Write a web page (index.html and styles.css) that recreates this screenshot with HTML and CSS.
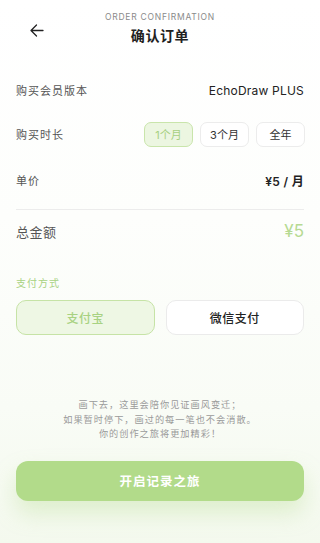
FILE: index.html
```html
<!DOCTYPE html>
<html lang="zh-CN">
<head>
<meta charset="utf-8">
<title>确认订单</title>
<link rel="stylesheet" href="styles.css">
</head>
<body>
<div class="page">
  <header class="header">
    <div class="back">
      <svg width="14" height="13" viewBox="0 0 14 13" fill="none" stroke="#222" stroke-width="1.3" stroke-linecap="round" stroke-linejoin="round"><path d="M13 6.5H1.2M6.5 1L1 6.5L6.5 12"/></svg>
    </div>
    <div class="titles">
      <div class="eyebrow">ORDER CONFIRMATION</div>
      <div class="title">确认订单</div>
    </div>
    <div></div>
  </header>

  <div class="row r1">
    <span class="label">购买会员版本</span>
    <span class="value">EchoDraw PLUS</span>
  </div>
  <div class="row r2">
    <span class="label">购买时长</span>
    <div class="chips">
      <span class="chip active">1个月</span>
      <span class="chip">3个月</span>
      <span class="chip">全年</span>
    </div>
  </div>
  <div class="row r3">
    <span class="label">单价</span>
    <span class="price">¥5 / 月</span>
  </div>
  <div class="divider"></div>
  <div class="row r4">
    <span class="label big">总金额</span>
    <span class="total">¥5</span>
  </div>

  <div class="paylabel">支付方式</div>
  <div class="pays">
    <div class="pay active">支付宝</div>
    <div class="pay">微信支付</div>
  </div>

  <p class="note">画下去，这里会陪你见证画风变迁；<br>如果暂时停下，画过的每一笔也不会消散。<br>你的创作之旅将更加精彩！</p>

  <div class="cta">开启记录之旅</div>
</div>
</body>
</html>
```
FILE: styles.css
```css
* { box-sizing: border-box; }
html, body { margin: 0; padding: 0; }
body {
  width: 320px;
  height: 543px;
  overflow: hidden;
  font-family: Inter, "Noto Sans CJK SC", sans-serif;
  background: linear-gradient(180deg, #ffffff 0%, #fdfefc 40%, #f9fcf6 75%, #f4f9ee 100%);
  color: #222;
}
.page { padding: 0 16px; }

.header {
  display: grid;
  grid-template-columns: 1fr auto 1fr;
  align-items: center;
  padding-top: 11px;
  height: 68px;
  align-content: start;
}
.back { padding-left: 14px; padding-top: 4px; display: flex; }
.titles { display: flex; flex-direction: column; align-items: center; }
.eyebrow {
  font-size: 8.5px;
  line-height: 12px;
  letter-spacing: 0.75px;
  color: #8a8a8a;
}
.title {
  margin-top: 3px;
  font-size: 14px;
  line-height: 20px;
  font-weight: 700;
  letter-spacing: 0.6px;
  color: #222;
}

.row {
  display: flex;
  align-items: center;
  justify-content: space-between;
  height: 44px;
}
.r3 { height: 48px; }
.r4 { height: 42px; }
.label {
  font-size: 11px;
  letter-spacing: 1px;
  color: #555;
}
.label.big { font-size: 13px; letter-spacing: 0.5px; color: #555; }
.value { font-size: 12px; color: #222; letter-spacing: 0.2px; }
.chips { display: flex; gap: 7px; margin-right: -1px; }
.chip {
  width: 49px;
  height: 25px;
  border: 1px solid #ececec;
  border-radius: 7px;
  background: #fff;
  display: flex;
  align-items: center;
  justify-content: center;
  font-size: 11px;
  color: #333;
}
.chip.active {
  background: #ecf6e1;
  border-color: #c9e5ab;
  color: #a7d07f;
}
.price { font-size: 12px; font-weight: 600; color: #222; letter-spacing: 0.3px; }
.divider { margin-top: 5px; height: 1px; background: #ececec; }
.total { font-size: 17px; color: #b6da92; }

.paylabel {
  margin-top: 24px;
  font-size: 10px;
  line-height: 14px;
  letter-spacing: 1px;
  color: #a8d282;
}
.pays {
  margin-top: 10px;
  display: grid;
  grid-template-columns: 1fr 1fr;
  gap: 11px;
}
.pay {
  height: 35px;
  border: 1px solid #ebebeb;
  border-radius: 10px;
  background: #fff;
  display: flex;
  align-items: center;
  justify-content: center;
  font-size: 12px;
  font-weight: 500;
  color: #222;
  letter-spacing: 0.5px;
}
.pay.active {
  background: #eef7e4;
  border-color: #c6e3a6;
  color: #a8d282;
}

.note {
  margin: 63px 0 0;
  text-align: center;
  font-size: 9.2px;
  line-height: 14.5px;
  letter-spacing: 1px;
  color: #9a9a9a;
}
.cta {
  margin-top: 19px;
  height: 40px;
  border-radius: 12px;
  background: #b2db8a;
  color: #fff;
  font-size: 12.5px;
  font-weight: 600;
  letter-spacing: 1px;
  display: flex;
  align-items: center;
  justify-content: center;
  box-shadow: 0 12px 22px rgba(178, 219, 138, 0.35);
}
```
